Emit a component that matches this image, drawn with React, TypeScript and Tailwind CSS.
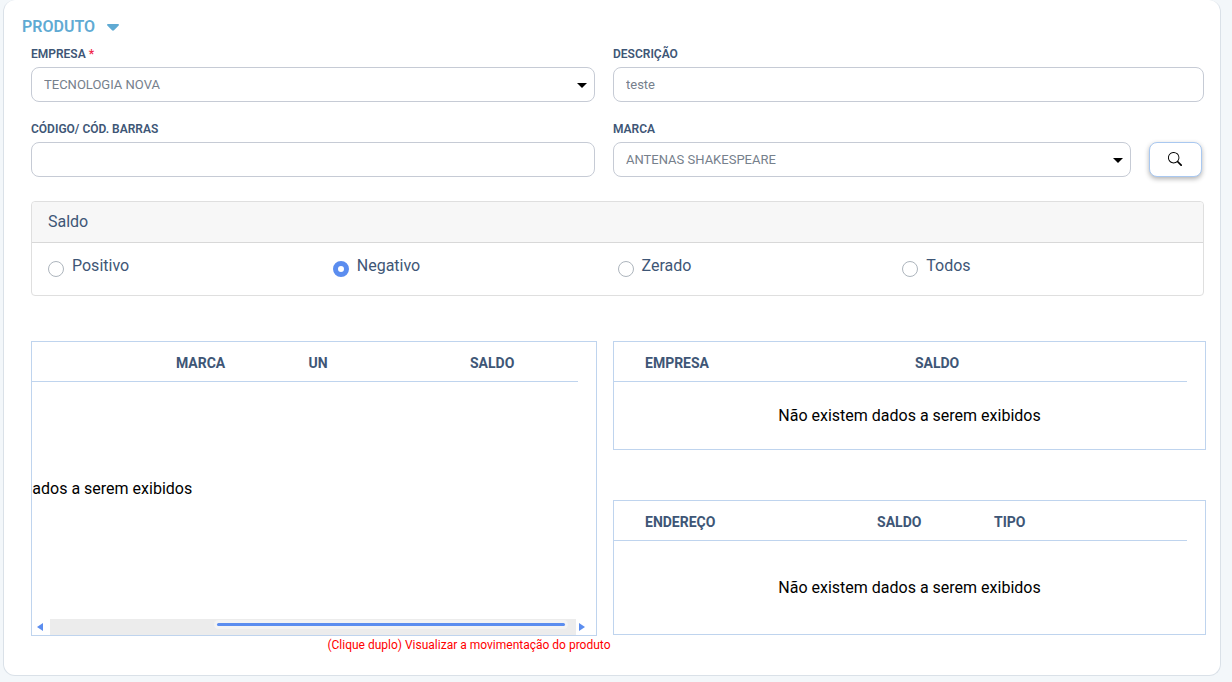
import React, { useState } from 'react';
import { BsSearch } from 'react-icons/bs';

const EMPTY_MESSAGE = 'Não existem dados a serem exibidos';

const saldoOptions = ['Positivo', 'Negativo', 'Zerado', 'Todos'];

const labelClass = 'block text-xs leading-[18px] font-semibold text-[#3e5676] mb-1';
const controlClass =
    'block w-full h-[35px] rounded-lg border border-[#c6cbd5] bg-white px-3 text-[13px] text-[#76808c] outline-none';

interface SelectFieldProps {
    id: string;
    label: string;
    option: string;
    required?: boolean;
}

const SelectField: React.FC<SelectFieldProps> = ({ id, label, option, required }) => (
    <div className="min-w-0 flex-1">
        <label htmlFor={id} className={labelClass}>
            {label}
            {required && <span className="text-[#f0284a]"> *</span>}
        </label>
        <div className="relative">
            <select id={id} className={`${controlClass} appearance-none`}>
                <option>{option}</option>
            </select>
            <svg className="pointer-events-none absolute right-2 top-4 h-[5px] w-[10px]" viewBox="0 0 10 5">
                <path d="M0 0h10L5 5z" fill="#000" />
            </svg>
        </div>
    </div>
);

const TextField: React.FC<{ id: string; label: string; initial?: string }> = ({ id, label, initial = '' }) => {
    const [value, setValue] = useState(initial);

    return (
        <div className="min-w-0">
            <label htmlFor={id} className={labelClass}>{label}</label>
            <input id={id} type="text" value={value} onChange={(e) => setValue(e.target.value)} className={controlClass} />
        </div>
    );
};

interface Column {
    title: string;
    width: string;
}

const HeaderTable: React.FC<{ columns: Column[] }> = ({ columns }) => (
    <div className="border-b border-[#bfd4ee]">
        <table className="w-full table-fixed">
            <thead>
                <tr>
                    {columns.map((col, i) => (
                        <th
                            key={i}
                            style={{ width: col.width }}
                            className="h-[39px] pl-[31px] pt-[2px] text-left align-middle text-sm font-bold text-[#3e5676]"
                        >
                            {col.title}
                        </th>
                    ))}
                </tr>
            </thead>
        </table>
    </div>
);

const produtoColumns: Column[] = [
    { title: '', width: '45.8%' },
    { title: 'MARCA', width: '16.6%' },
    { title: 'UN', width: '20.2%' },
    { title: 'SALDO', width: '17.4%' },
];

const empresaColumns: Column[] = [
    { title: 'EMPRESA', width: '47.1%' },
    { title: 'SALDO', width: '52.9%' },
];

const enderecoColumns: Column[] = [
    { title: 'ENDEREÇO', width: '40.5%' },
    { title: 'SALDO', width: '20.4%' },
    { title: 'TIPO', width: '39.1%' },
];

const ScrollBar: React.FC<{ start: number; size: number }> = ({ start, size }) => (
    <div className="flex h-4">
        <button type="button" aria-label="Rolar para a esquerda" className="flex w-[18px] items-center pl-[5px]">
            <svg className="h-2 w-[6px]" viewBox="0 0 6 8">
                <path d="M6 0v8L0 4z" fill="#5b8def" />
            </svg>
        </button>
        <div className="flex-1 bg-[#ececec] pt-px">
            <div
                className="h-[9px] rounded-full bg-[#f3f3f3] p-[3px]"
                style={{ marginLeft: `${start}%`, width: `${size}%` }}
            >
                <div className="h-[3px] rounded-full bg-[#5b8def]" />
            </div>
        </div>
        <button type="button" aria-label="Rolar para a direita" className="flex w-5 items-center pl-[3px]">
            <svg className="h-2 w-[6px]" viewBox="0 0 6 8">
                <path d="M0 0v8l6-4z" fill="#5b8def" />
            </svg>
        </button>
    </div>
);

const App: React.FC = () => {
    const [saldo, setSaldo] = useState('Negativo');

    return (
        <div className="min-h-screen bg-[#f3f7fa] pl-[3px] pr-[11px] font-[Roboto,'Liberation_Sans',sans-serif]">
            <main className="rounded-xl border border-t-0 border-[#dae1e8] bg-white pb-[21px] pl-[27px] pr-[14px] pt-[15px]">
                <h1 className="-ml-[9px] mb-[6px]">
                    <button type="button" className="flex items-center gap-3 text-base font-semibold leading-6 text-[#5faad3]">
                        PRODUTO
                        <svg className="h-[7px] w-3" viewBox="0 0 12 7">
                            <path d="M1 0h10c.9 0 1.3.9.7 1.5L7 6.3c-.6.6-1.4.6-2 0L.3 1.5C-.3.9.1 0 1 0z" fill="#5faad3" />
                        </svg>
                    </button>
                </h1>

                <form className="mr-[2px]" onSubmit={(e) => e.preventDefault()}>
                    <div className="grid grid-cols-[564fr_591fr] gap-[18px]">
                        <SelectField id="empresa" label="EMPRESA" option="TECNOLOGIA NOVA" required />
                        <TextField id="descricao" label="DESCRIÇÃO" initial="teste" />
                        <TextField id="codigo" label="CÓDIGO/ CÓD. BARRAS" />
                        <div className="flex items-end gap-[18px] pr-[2px]">
                            <SelectField id="marca" label="MARCA" option="ANTENAS SHAKESPEARE" />
                            <button
                                type="submit"
                                aria-label="Pesquisar"
                                className="flex h-[35px] w-[53px] items-center justify-center rounded-lg border border-[#a9c8f0] bg-white pb-[2px] pr-[2px] text-black shadow-[0_2px_5px_rgba(0,0,0,0.3)]"
                            >
                                <BsSearch size={14} />
                            </button>
                        </div>
                    </div>

                    <fieldset aria-label="Saldo" className="mt-6 rounded border border-[#dfdfdf] text-base leading-6 text-[#3e5676]">
                        <div className="rounded-t border-b border-[#d8d8d8] bg-[#f7f7f7] px-4 py-2">Saldo</div>
                        <div className="grid grid-cols-4 px-4 pb-[17px] pt-[11px]">
                            {saldoOptions.map(option => (
                                <label key={option} className="flex gap-2">
                                    <input
                                        type="radio"
                                        name="saldo"
                                        value={option}
                                        checked={saldo === option}
                                        onChange={() => setSaldo(option)}
                                        className="mt-[7px] size-4 appearance-none rounded-full border border-[#adb5bd] bg-white checked:border-5 checked:border-[#5b8def]"
                                    />
                                    {option}
                                </label>
                            ))}
                        </div>
                    </fieldset>
                </form>

                <div className="mt-[45px] grid grid-cols-[566fr_593fr] gap-4">
                    <section className="flex h-[295px] min-w-0 flex-col border border-[#bfd4ee]">
                        {/* Scrolled to the right end, so the first columns stay out of view */}
                        <div className="flex flex-1 justify-end overflow-hidden pr-[18px]">
                            <div className="flex w-[799px] shrink-0 flex-col">
                                <HeaderTable columns={produtoColumns} />
                                <p className="flex w-[564px] flex-1 items-center justify-center pb-6 text-base text-black">
                                    {EMPTY_MESSAGE}
                                </p>
                            </div>
                        </div>
                        <ScrollBar start={31.2} size={67.3} />
                    </section>

                    <div className="flex min-w-0 flex-col gap-[50px]">
                        <section className="border border-[#bfd4ee]">
                            <div className="pr-[18px]">
                                <HeaderTable columns={empresaColumns} />
                            </div>
                            <p className="flex h-[67px] items-center justify-center text-base text-black">{EMPTY_MESSAGE}</p>
                        </section>
                        <section className="border border-[#bfd4ee]">
                            <div className="pr-[18px]">
                                <HeaderTable columns={enderecoColumns} />
                            </div>
                            <p className="flex h-[93px] items-center justify-center text-base text-black">{EMPTY_MESSAGE}</p>
                        </section>
                    </div>
                </div>

                <p className="w-1/2 pr-2 text-right text-xs leading-[18px] text-[#ff0000]">
                    (Clique duplo) Visualizar a movimentação do produto
                </p>
            </main>
        </div>
    );
};

export default App;
